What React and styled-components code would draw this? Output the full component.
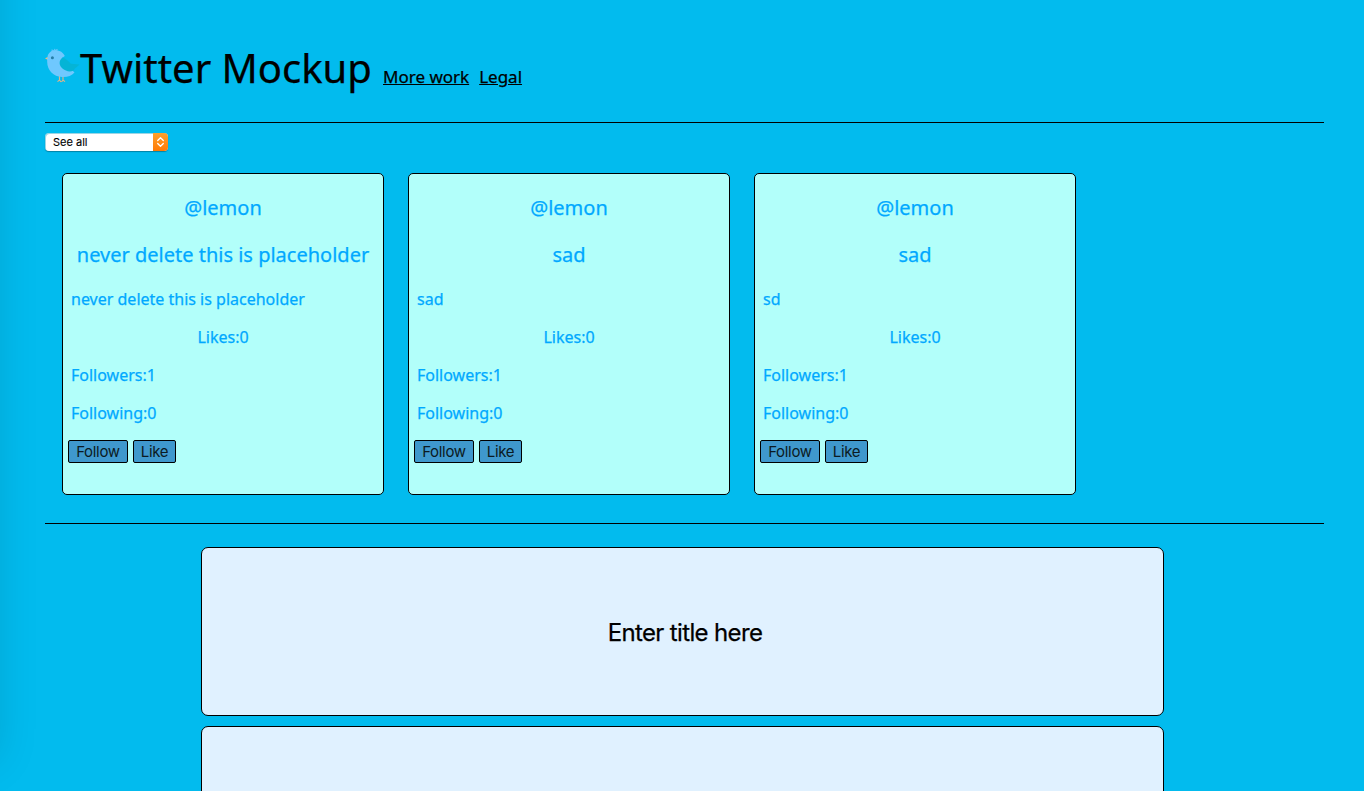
import React from "react";
import styled, { createGlobalStyle } from "styled-components";

const GlobalStyle = createGlobalStyle`
  * { box-sizing: border-box; }
  html, body { margin: 0; height: 100%; overflow: hidden; background: #02bbee; }
  body {
    font-family: "Noto Sans", "Open Sans", sans-serif;
    color: #000;
    -webkit-text-stroke: 0.25px currentColor;
  }
  p, h1, h2, h3 { margin: 0; font-weight: 400; }
`;

const Page = styled.main`
  height: 791px;
  padding: 0 40px 0 45px;
  overflow: hidden;
  background: #02bbee;
`;

const EdgeShadow = styled.div`
  position: fixed;
  top: -60px;
  left: -60px;
  width: 56px;
  height: 820px;
  box-shadow: 0 0 44px rgba(0, 0, 0, 0.13);
`;

const Header = styled.header`
  display: flex;
  align-items: baseline;
  height: 123px;
  padding-top: 40px;
  border-bottom: 1px solid #000;
`;

const Logo = styled.svg`
  width: 35px;
  height: 36px;
  flex: none;
  align-self: flex-start;
  margin-top: 8px;
`;

const Title = styled.h1`
  width: 303px;
  font-size: 40px;
  line-height: 55px;
  white-space: nowrap;
`;

const NavLink = styled.a`
  margin-right: 10px;
  font-size: 17px;
  color: #000;
  text-decoration: underline;
  cursor: pointer;
`;

const Select = styled.button`
  display: flex;
  align-items: stretch;
  justify-content: space-between;
  width: 123px;
  height: 18px;
  margin-top: 10px;
  padding: 0;
  border: 0;
  border-radius: 4px;
  overflow: hidden;
  background: #fff;
  box-shadow: inset 1px 1px 0 rgba(2, 150, 190, 0.4), 0 1px 1px rgba(0, 0, 0, 0.3);
  font: 11px/18px Inter, sans-serif;
  color: #000;
  -webkit-text-stroke: 0.1px currentColor;
`;

const SelectLabel = styled.span`
  padding-left: 8px;
`;

const SelectArrows = styled.span`
  display: flex;
  width: 15px;
  background: linear-gradient(#ffa12c, #ff7a05);
`;

const CardRow = styled.section`
  display: flex;
  gap: 24px;
  height: 373px;
  padding: 22px 0 0 17px;
  border-bottom: 1px solid #000;
`;

const Card = styled.article`
  width: 322px;
  height: 322px;
  padding: 20px 5px 0;
  border: 1px solid #000;
  border-radius: 5px;
  background: #b2fffa;
  color: #00a8ff;
`;

const CardHeading = styled.h2`
  margin-bottom: 20px;
  font-size: 20px;
  line-height: 27px;
  text-align: center;
  white-space: nowrap;
`;

const CardText = styled.p`
  margin-bottom: 16px;
  padding: 0 3px;
  font-size: 16px;
  line-height: 22px;
  text-align: ${(p) => (p.$centered ? "center" : "left")};
`;

const Actions = styled.div`
  display: flex;
  gap: 5px;
`;

const ActionButton = styled.button`
  width: ${(p) => p.$width}px;
  height: 23px;
  padding: 0;
  border: 1px solid #000;
  border-radius: 2px;
  background: #3f98cd;
  font: 15px/21px Inter, sans-serif;
  letter-spacing: -0.3px;
  color: #0b1a22;
  -webkit-text-stroke: 0;
`;

const Composer = styled.form`
  display: flex;
  flex-direction: column;
  gap: 10px;
  padding: 23px 160px 0 156px;
`;

const Field = styled.input`
  width: 963px;
  height: 169px;
  padding: 2px 0 0 5px;
  border: 1px solid #000;
  border-radius: 7px;
  background: #e0f1ff;
  font: 24px Inter, sans-serif;
  letter-spacing: -0.65px;
  text-align: center;
  color: #000;
  outline: 0;
  &::placeholder { color: #000; opacity: 1; }
`;

const posts = [
  { title: "never delete this is placeholder", body: "never delete this is placeholder" },
  { title: "sad", body: "sad" },
  { title: "sad", body: "sd" },
];

function Bird() {
  return (
    <Logo viewBox="0 0 35 36" aria-hidden="true">
      <path d="M9 3 6.500 1.800M10 3 9.500 .8M10 3l2.500-1.700" stroke="#5cc4fa" strokeWidth="1.300" fill="none" />
      <path d="M14.500 28v5M18 28v5M12.500 33.600l2-1.600 1.500 2M16.500 34l1.500-2 2 1.600" stroke="#d9b48c" strokeWidth="1.200" fill="none" />
      <path d="M0 10.300 3.500 8.800v3.600z" fill="#f0bc7c" />
      <path d="M2.500 9C3 5 6 2.200 10.500 2.200c4.500 0 7.800 2.200 9.300 5.800L17 10c3 3 5 7 8 10l4.500 4.500c-3 3.300-7 4.800-12.500 4.500C8.500 28.500 2.200 22.500 2.200 14c0-2-.1-3 .3-5z" fill="#6fc8fe" />
      <path d="M17.500 9.500c3 1 6 3.300 8.300 6.300l8.400.7c-1 1.700-2.700 2.700-4.200 3.700-.8 2-2.700 3.300-5.200 3.300C19.500 23 14.800 19.500 14.600 15.300c0-2.500 1-4.300 2.900-5.800z" fill="#05b4d6" />
      <circle cx="7.400" cy="9.800" r="1.500" fill="#267da7" />
    </Logo>
  );
}

export default function App() {
  return (
    <Page>
      <GlobalStyle />
      <EdgeShadow />
      <Header>
        <Bird />
        <Title>Twitter Mockup</Title>
        <NavLink>More work</NavLink>
        <NavLink>Legal</NavLink>
      </Header>
      <Select>
        <SelectLabel>See all</SelectLabel>
        <SelectArrows>
          <svg width="15" height="18" viewBox="0 0 15 18" fill="none" stroke="#fff" strokeWidth="1.3" strokeLinecap="round" strokeLinejoin="round">
            <path d="m4.700 7.500 2.800-2.800 2.800 2.800M4.700 10.500l2.800 2.800 2.800-2.800" />
          </svg>
        </SelectArrows>
      </Select>
      <CardRow>
        {posts.map((post, i) => (
          <Card key={i}>
            <CardHeading>@lemon</CardHeading>
            <CardHeading>{post.title}</CardHeading>
            <CardText>{post.body}</CardText>
            <CardText $centered>Likes:0</CardText>
            <CardText>Followers:1</CardText>
            <CardText>Following:0</CardText>
            <Actions>
              <ActionButton $width={60}>Follow</ActionButton>
              <ActionButton $width={43}>Like</ActionButton>
            </Actions>
          </Card>
        ))}
      </CardRow>
      <Composer>
        <Field placeholder="Enter title here" />
        <Field />
      </Composer>
    </Page>
  );
}
